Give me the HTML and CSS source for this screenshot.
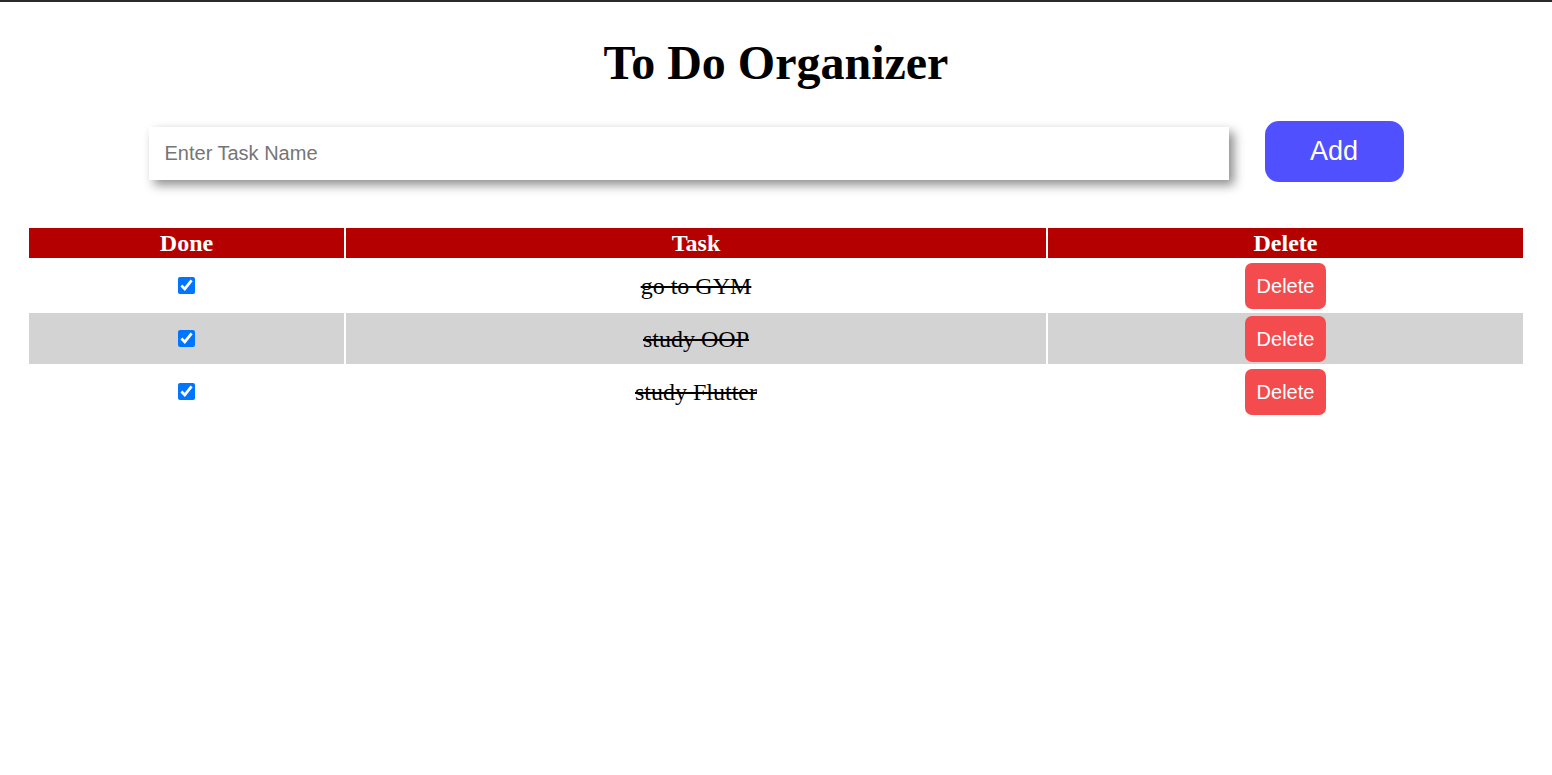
FILE: index.html
```html
<!DOCTYPE html>
<html>
<head>
<meta charset="utf-8">
<title>To Do Organizer</title>
<link rel="stylesheet" href="styles.css">
</head>
<body>
<div class="page">
  <h1 class="title">To Do Organizer</h1>
  <div class="entry">
    <input class="task-input" type="text" placeholder="Enter Task Name">
    <button class="add-btn">Add</button>
  </div>
  <table class="tasks">
    <thead>
      <tr>
        <th class="col-done">Done</th>
        <th class="col-task">Task</th>
        <th class="col-del">Delete</th>
      </tr>
    </thead>
    <tbody>
      <tr>
        <td><input class="check" type="checkbox" checked></td>
        <td class="done-text">go to GYM</td>
        <td><button class="del-btn">Delete</button></td>
      </tr>
      <tr class="alt">
        <td><input class="check" type="checkbox" checked></td>
        <td class="done-text">study OOP</td>
        <td><button class="del-btn">Delete</button></td>
      </tr>
      <tr>
        <td><input class="check" type="checkbox" checked></td>
        <td class="done-text">study Flutter</td>
        <td><button class="del-btn">Delete</button></td>
      </tr>
    </tbody>
  </table>
</div>
</body>
</html>
```

FILE: styles.css
```css
html, body {
  margin: 0;
  padding: 0;
  background: #ffffff;
}
body {
  border-top: 2px solid #2b2b2e;
  font-family: "Liberation Serif", "Times New Roman", serif;
  color: #000;
}
.page {
  padding: 0 27px;
}
.title {
  margin: 33px 0 0;
  text-align: center;
  font-size: 48px;
  font-weight: bold;
  line-height: 55px;
}
.entry {
  display: flex;
  justify-content: center;
  align-items: center;
  gap: 36px;
  margin-top: 31px;
}
.task-input {
  width: 1080px;
  height: 53px;
  box-sizing: border-box;
  border: none;
  outline: none;
  padding: 0 16px;
  font-family: "Liberation Sans", Arial, sans-serif;
  font-size: 20px;
  color: #333;
  box-shadow: 5px 5px 10px rgba(0,0,0,0.45);
  background: #fff;
}
.task-input::placeholder {
  color: #757575;
}
.add-btn {
  width: 139px;
  height: 61px;
  margin-bottom: 4px;
  border: none;
  border-radius: 14px;
  background: #5050ff;
  color: #fff;
  font-family: "Liberation Sans", Arial, sans-serif;
  font-size: 27px;
  cursor: pointer;
}
.tasks {
  width: 100%;
  margin-top: 40px;
  border-collapse: separate;
  border-spacing: 2px;
  text-align: center;
}
.tasks th {
  background: #b50000;
  color: #fff;
  font-size: 24px;
  font-weight: bold;
  height: 30px;
  line-height: 28px;
  padding: 0;
}
.col-done { width: 315px; }
.col-task { width: 700px; }
.tasks td {
  padding: 2px 0 1px;
  height: 48px;
  font-size: 24px;
  line-height: 28px;
}
.tasks tr.alt td {
  background: #d3d3d3;
}
.done-text {
  text-decoration: line-through;
}
.check {
  width: 17px;
  height: 17px;
  margin: 0 0 6px;
  accent-color: #0075ff;
  vertical-align: middle;
}
.del-btn {
  width: 81px;
  height: 46px;
  border: none;
  border-radius: 7px;
  background: #f44b4f;
  color: #fff;
  font-family: "Liberation Sans", Arial, sans-serif;
  font-size: 20px;
  cursor: pointer;
  vertical-align: middle;
}
```
